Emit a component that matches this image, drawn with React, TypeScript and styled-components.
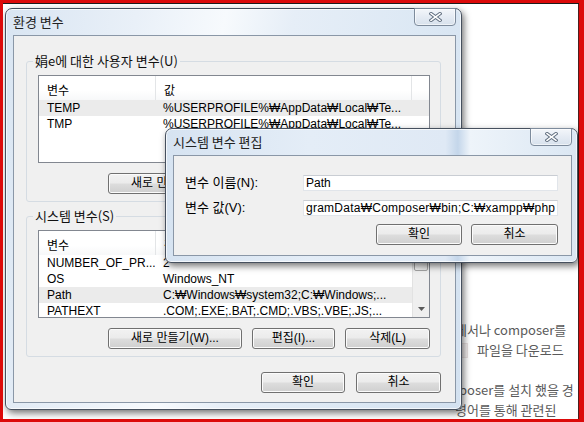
import React from "react";
import styled, { createGlobalStyle, css } from "styled-components";

const UI_FONT = `"Liberation Sans", "Noto Sans CJK KR", sans-serif`;
const KR_FONT = `"Noto Sans CJK KR", "Liberation Sans", sans-serif`;

const GlobalStyle = createGlobalStyle`
  html, body { margin: 0; padding: 0; background: #ffffff; }
  body {
    width: 584px;
    height: 422px;
    overflow: hidden;
    font-family: ${UI_FONT};
    font-size: 12px;
    color: #000;
  }
  * { box-sizing: border-box; }
`;

const Desktop = styled.div`
  position: relative;
  width: 584px;
  height: 422px;
  border: 3px solid #dc0a0a;
  border-right-width: 5px;
  background: #ffffff;
  overflow: hidden;
  box-shadow: inset 0 1px 0 #1c1c1c, inset -1px 0 0 #4a2020;
`;

/* ---------- background blog page ---------- */
const BlogText = styled.div`
  position: absolute;
  left: 449px;
  top: 317px;
  font-family: ${KR_FONT};
  font-size: 13px;
  line-height: 20px;
  color: #5a5a5a;
  white-space: nowrap;
`;

const BlogLine = styled.div<{ $indent: number }>`
  height: 20px;
  padding-left: ${(p) => p.$indent}px;
  display: flex;
  align-items: center;
`;

const InlineCode = styled.span`
  display: inline-block;
  width: 12px;
  height: 15px;
  margin-right: 9px;
  background: #f4f0f0;
  border: 1px solid #ebe3e3;
`;

/* ---------- windows ---------- */
const glass = {
  main: css`
    background: linear-gradient(
      100deg,
      #d9e5f2 0%,
      #e9f0f8 25%,
      #f7fafd 42%,
      #e6eef7 55%,
      #dce8f4 80%,
      #d3e1f0 100%
    );
  `,
  dialog: css`
    background: linear-gradient(
      90deg,
      #d6e3f1 0%,
      #e4edf7 35%,
      #dfe9f5 68%,
      #c4d6ea 71%,
      #eef4fa 74%,
      #dbe7f3 100%
    );
  `,
};

const Window = styled.section<{
  $left: number;
  $top: number;
  $width: number;
  $height: number;
  $variant: "main" | "dialog";
}>`
  position: absolute;
  left: ${(p) => p.$left}px;
  top: ${(p) => p.$top}px;
  width: ${(p) => p.$width}px;
  height: ${(p) => p.$height}px;
  display: flex;
  flex-direction: column;
  padding: 0 5px 6px 7px;
  border: 1px solid #46505e;
  border-radius: 7px 7px 6px 6px;
  ${(p) => glass[p.$variant]};
  box-shadow: inset 0 0 0 1px rgba(255, 255, 255, 0.7),
    2px 3px 7px rgba(0, 0, 0, 0.55);
`;

const TitleBar = styled.header`
  flex: none;
  height: 26px;
  display: flex;
  align-items: flex-start;
  justify-content: space-between;
`;

const Title = styled.h1`
  margin: 0;
  font-family: ${KR_FONT};
  font-size: 13px;
  font-weight: normal;
  line-height: 26px;
  color: #222;
`;

const CloseButton = styled.button`
  margin-top: -1px;
  width: 42px;
  height: 18px;
  padding: 0;
  border: 1px solid #7d8b9c;
  border-radius: 0 0 4px 4px;
  background: linear-gradient(#f3f6fa, #e2e9f2 60%, #d7e1ec);
  box-shadow: inset 0 0 0 1px rgba(255, 255, 255, 0.6);
  display: flex;
  align-items: center;
  justify-content: center;
`;

const CloseGlyph = () => (
  <svg width="13" height="10" viewBox="0 0 13 10" aria-hidden="true">
    <path
      d="M2 1.6 L11 8.4 M11 1.6 L2 8.4"
      stroke="#5e6c7d"
      strokeWidth="3.4"
      strokeLinecap="square"
      fill="none"
    />
    <path
      d="M2 1.6 L11 8.4 M11 1.6 L2 8.4"
      stroke="#ffffff"
      strokeWidth="1.5"
      strokeLinecap="square"
      fill="none"
    />
  </svg>
);

const Client = styled.div<{ $pad: string }>`
  flex: 1;
  min-height: 0;
  display: flex;
  flex-direction: column;
  padding: ${(p) => p.$pad};
  background: #f0f0f0;
  border: 1px solid #8a97a7;
`;

/* ---------- group boxes ---------- */
const GroupBox = styled.fieldset<{ $spaced?: boolean }>`
  margin: ${(p) => (p.$spaced ? "7px 0 0" : "0")};
  padding: 7px 10px 7px 11px;
  min-width: 0;
  border: 1px solid #d5dce3;
  border-radius: 3px;
  display: flex;
  flex-direction: column;
  gap: 10px;
`;

const Legend = styled.legend`
  margin-left: -5px;
  padding: 0 2px;
  font-family: ${KR_FONT};
  font-size: 13px;
  line-height: 14px;
  color: #111;
`;

/* ---------- list views ---------- */
const ListView = styled.div`
  height: 88px;
  flex: none;
  display: flex;
  border: 1px solid #828790;
  background: #ffffff;
  overflow: hidden;
`;

const ListBody = styled.div`
  flex: 1;
  min-width: 0;
  display: flex;
  flex-direction: column;
`;

const HeaderRow = styled.div`
  flex: none;
  height: 24px;
  display: grid;
  grid-template-columns: 117px 256px 1fr;
  background: linear-gradient(#ffffff, #ffffff 60%, #f7f8f9);
`;

const HeaderCell = styled.div<{ $divider?: boolean }>`
  display: flex;
  align-items: center;
  padding: 2px 0 0 8px;
  font-family: ${KR_FONT};
  border-right: ${(p) => (p.$divider ? "1px solid #e3e5e7" : "none")};
`;

const Row = styled.div<{ $selected?: boolean }>`
  flex: none;
  height: 16px;
  display: grid;
  grid-template-columns: 116px 1fr;
  line-height: 16px;
  white-space: nowrap;
  background: ${(p) => (p.$selected ? "#ebebeb" : "transparent")};
`;

const Cell = styled.span`
  padding-left: 8px;
  overflow: hidden;
`;

const ScrollBar = styled.div`
  width: 17px;
  flex: none;
  display: flex;
  flex-direction: column;
  background: #efefef;
  border-left: 1px solid #e2e2e2;
`;

const ScrollButton = styled.div`
  height: 17px;
  flex: none;
  display: flex;
  align-items: center;
  justify-content: center;
`;

const Thumb = styled.div`
  height: 23px;
  flex: none;
  margin: 0 1px;
  border: 1px solid #a3a3a3;
  border-radius: 2px;
  background: linear-gradient(90deg, #f4f4f4, #e6e6e6);
`;

const TrackGap = styled.div`
  flex: 1;
`;

/* ---------- buttons ---------- */
const ButtonRow = styled.div<{ $gap: number; $top?: number }>`
  display: flex;
  justify-content: flex-end;
  gap: ${(p) => p.$gap}px;
  margin-top: ${(p) => p.$top ?? 0}px;
`;

const PushButton = styled.button<{ $w: number }>`
  width: ${(p) => p.$w}px;
  height: 21px;
  padding: 0;
  border: 1px solid #707070;
  border-radius: 3px;
  background: linear-gradient(#f2f2f2 0%, #ebebeb 49%, #dddddd 51%, #cfcfcf 100%);
  box-shadow: inset 0 0 0 1px #fbfbfb;
  font-family: ${UI_FONT};
  font-size: 12px;
  line-height: 19px;
  color: #000;
`;

/* ---------- edit dialog form ---------- */
const Form = styled.div`
  display: grid;
  grid-template-columns: 118px 1fr;
  grid-auto-rows: 16px;
  row-gap: 9px;
  align-items: center;
`;

const FieldLabel = styled.label`
  font-family: ${UI_FONT};
  font-size: 13px;
  line-height: 16px;
`;

const TextField = styled.div`
  height: 16px;
  padding: 0 2px;
  display: flex;
  align-items: center;
  overflow: hidden;
  white-space: nowrap;
  line-height: 14px;
  background: #ffffff;
  border: 1px solid #e1e5ea;
  border-top-color: #c9cdd3;
`;

const ScrolledValue = styled.span`
  letter-spacing: 0.25px;
`;

/* ---------- data ---------- */
const userVars = [
  { name: "TEMP", value: "%USERPROFILE%₩AppData₩Local₩Te...", selected: true },
  { name: "TMP", value: "%USERPROFILE%₩AppData₩Local₩Te..." },
];

const systemVars = [
  { name: "NUMBER_OF_PR...", value: "2" },
  { name: "OS", value: "Windows_NT" },
  { name: "Path", value: "C:₩Windows₩system32;C:₩Windows;...", selected: true },
  { name: "PATHEXT", value: ".COM;.EXE;.BAT;.CMD;.VBS;.VBE;.JS;..." },
];

type Var = { name: string; value: string; selected?: boolean };

const VarList = ({ rows, scroll }: { rows: Var[]; scroll?: boolean }) => (
  <ListView>
    <ListBody>
      <HeaderRow>
        <HeaderCell $divider>변수</HeaderCell>
        <HeaderCell $divider>값</HeaderCell>
        <HeaderCell />
      </HeaderRow>
      {rows.map((r) => (
        <Row key={r.name} $selected={r.selected}>
          <Cell>{r.name}</Cell>
          <Cell>{r.value}</Cell>
        </Row>
      ))}
    </ListBody>
    {scroll && (
      <ScrollBar>
        <ScrollButton />
        <Thumb />
        <TrackGap />
        <ScrollButton>
          <svg width="7" height="4" viewBox="0 0 7 4" aria-hidden="true">
            <path d="M0 0 H7 L3.5 4 Z" fill="#5a5a5a" />
          </svg>
        </ScrollButton>
      </ScrollBar>
    )}
  </ListView>
);

export default function App() {
  return (
    <>
      <GlobalStyle />
      <Desktop>
        <BlogText>
          <BlogLine $indent={3}>에서나 composer를</BlogLine>
          <BlogLine $indent={4}>
            <InlineCode />
            파일을 다운로드
          </BlogLine>
          <BlogLine $indent={0} />
          <BlogLine $indent={7}>poser를 설치 했을 경</BlogLine>
          <BlogLine $indent={3}>령어를 통해 관련된</BlogLine>
        </BlogText>

        <Window $left={2} $top={5} $width={457} $height={402} $variant="main">
          <TitleBar>
            <Title>환경 변수</Title>
            <CloseButton aria-label="닫기">
              <CloseGlyph />
            </CloseButton>
          </TitleBar>
          <Client $pad="18px 14px 0 12px">
            <GroupBox>
              <Legend>娟e에 대한 사용자 변수(U)</Legend>
              <VarList rows={userVars} />
              <ButtonRow $gap={10}>
                <PushButton $w={134}>새로 만들기(W)...</PushButton>
                <PushButton $w={83}>편집(I)...</PushButton>
                <PushButton $w={85}>삭제(L)</PushButton>
              </ButtonRow>
            </GroupBox>
            <GroupBox $spaced>
              <Legend>시스템 변수(S)</Legend>
              <VarList rows={systemVars} scroll />
              <ButtonRow $gap={10}>
                <PushButton $w={134}>새로 만들기(W)...</PushButton>
                <PushButton $w={83}>편집(I)...</PushButton>
                <PushButton $w={85}>삭제(L)</PushButton>
              </ButtonRow>
            </GroupBox>
            <ButtonRow $gap={11} $top={15}>
              <PushButton $w={84}>확인</PushButton>
              <PushButton $w={85}>취소</PushButton>
            </ButtonRow>
          </Client>
        </Window>

        <Window $left={162} $top={125} $width={413} $height={135} $variant="dialog">
          <TitleBar>
            <Title>시스템 변수 편집</Title>
            <CloseButton aria-label="닫기">
              <CloseGlyph />
            </CloseButton>
          </TitleBar>
          <Client $pad="19px 13px 0 11px">
            <Form>
              <FieldLabel>변수 이름(N):</FieldLabel>
              <TextField>Path</TextField>
              <FieldLabel>변수 값(V):</FieldLabel>
              <TextField>
                <ScrolledValue>gramData₩Composer₩bin;C:₩xampp₩php</ScrolledValue>
              </TextField>
            </Form>
            <ButtonRow $gap={9} $top={8}>
              <PushButton $w={86}>확인</PushButton>
              <PushButton $w={87}>취소</PushButton>
            </ButtonRow>
          </Client>
        </Window>
      </Desktop>
    </>
  );
}
